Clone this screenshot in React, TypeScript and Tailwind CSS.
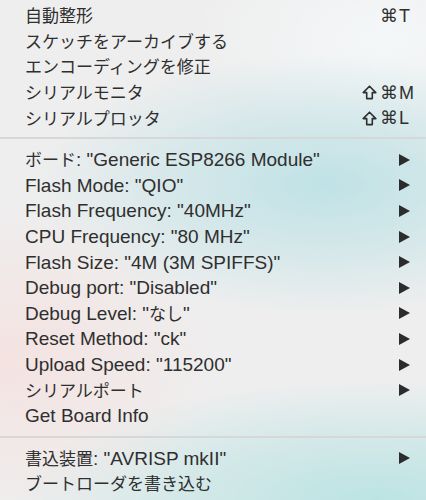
import React from "react";

type Part = { t: string; jp?: boolean };
type Item = {
  label: Part[];
  shift?: boolean;
  keyChar?: string;
  sub?: boolean;
};

const jp = (t: string): Part => ({ t, jp: true });
const en = (t: string): Part => ({ t });

const groupA: Item[] = [
  { label: [jp("自動整形")], keyChar: "T" },
  { label: [jp("スケッチをアーカイブする")] },
  { label: [jp("エンコーディングを修正")] },
  { label: [jp("シリアルモニタ")], shift: true, keyChar: "M" },
  { label: [jp("シリアルプロッタ")], shift: true, keyChar: "L" },
];

const groupB: Item[] = [
  { label: [jp("ボード"), en(': "Generic ESP8266 Module"')], sub: true },
  { label: [en('Flash Mode: "QIO"')], sub: true },
  { label: [en('Flash Frequency: "40MHz"')], sub: true },
  { label: [en('CPU Frequency: "80 MHz"')], sub: true },
  { label: [en('Flash Size: "4M (3M SPIFFS)"')], sub: true },
  { label: [en('Debug port: "Disabled"')], sub: true },
  { label: [en('Debug Level: "'), jp("なし"), en('"')], sub: true },
  { label: [en('Reset Method: "ck"')], sub: true },
  { label: [en('Upload Speed: "115200"')], sub: true },
  { label: [jp("シリアルポート")], sub: true },
  { label: [en("Get Board Info")] },
];

const groupC: Item[] = [
  { label: [jp("書込装置"), en(': "AVRISP mkII"')], sub: true },
  { label: [jp("ブートローダを書き込む")] },
];

function SubArrow() {
  return (
    <svg width="11" height="12" viewBox="0 0 11 12" className="block">
      <path d="M0 0 L11 6 L0 12 Z" fill="#2c2c2c" />
    </svg>
  );
}

// outline shift arrow like the mac menu glyph
function ShiftIcon() {
  return (
    <svg width="15" height="15" viewBox="0 0 15 15" className="mr-[3px] block">
      <path
        d="M7.5 1.2 L13.8 7.6 L10.3 7.6 L10.3 13.6 L4.7 13.6 L4.7 7.6 L1.2 7.6 Z"
        fill="none"
        stroke="#2f2f2f"
        strokeWidth="1.6"
        strokeLinejoin="round"
      />
    </svg>
  );
}

function MenuRow({ item }: { item: Item }) {
  return (
    <div className="flex h-[25.6px] items-center pl-[25px] pr-[12px]">
      <div className="whitespace-nowrap text-[19px] leading-none">
        {item.label.map((p, i) =>
          p.jp ? (
            <span
              key={i}
              className="text-[17px] font-['Noto_Sans_CJK_JP',sans-serif]"
            >
              {p.t}
            </span>
          ) : (
            <span key={i}>{p.t}</span>
          )
        )}
      </div>
      {item.keyChar && (
        <div className="ml-auto flex items-center text-[18px] leading-none">
          {item.shift && <ShiftIcon />}
          <span className="font-['DejaVu_Sans',sans-serif] text-[18px]">⌘</span>
          <span className="w-[16px] pl-[1px]">{item.keyChar}</span>
        </div>
      )}
      {item.sub && (
        <div className="ml-auto pr-[4px]">
          <SubArrow />
        </div>
      )}
    </div>
  );
}

function Separator({ top }: { top: string }) {
  return (
    <div className={top}>
      <div className="h-[2px] bg-[#d6d8d8]" />
    </div>
  );
}

export default function App() {
  return (
    <div className="h-[500px] w-[426px] overflow-hidden bg-[#eeeeee] bg-[radial-gradient(ellipse_68%_26%_at_76%_37%,#c0e2e6_0%,rgba(192,226,230,0.6)_45%,rgba(192,226,230,0)_100%),radial-gradient(ellipse_50%_32%_at_2%_72%,#f4e3e1_0%,rgba(244,227,225,0)_100%),radial-gradient(ellipse_85%_24%_at_88%_100%,#bce3e3_0%,rgba(188,227,227,0.55)_50%,rgba(188,227,227,0)_100%),radial-gradient(ellipse_45%_22%_at_90%_8%,#f4f7f8_0%,rgba(244,247,248,0)_100%)] font-['Liberation_Sans','Noto_Sans_CJK_JP',sans-serif] text-[#2f2f2f]">
      <div className="pt-[3px]">
        {groupA.map((it, i) => (
          <MenuRow key={i} item={it} />
        ))}
        <Separator top="pt-[6px] pb-[8px]" />
        {groupB.map((it, i) => (
          <MenuRow key={i} item={it} />
        ))}
        <Separator top="pt-[7px] pb-[8px]" />
        {groupC.map((it, i) => (
          <MenuRow key={i} item={it} />
        ))}
      </div>
    </div>
  );
}
